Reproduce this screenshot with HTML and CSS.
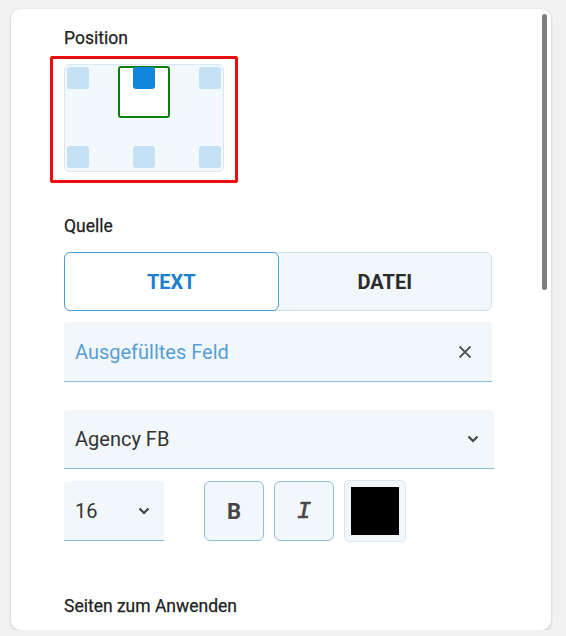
FILE: index.html
```html
<!DOCTYPE html>
<html lang="de">
<head>
    <meta charset="UTF-8">
    <meta name="viewport" content="width=device-width, initial-scale=1.0">
    <title>Textstempel</title>
    <link rel="stylesheet" href="styles.css">
</head>
<body>
    <div class="panel">
        <div class="panel-scroll">
            <div class="label">Position</div>

            <div class="position-frame">
                <div class="position-grid">
                    <div class="pos-col">
                        <span class="pos-dot"></span>
                        <span class="pos-dot"></span>
                    </div>
                    <div class="pos-col">
                        <span class="pos-dot active"></span>
                        <span class="pos-dot"></span>
                    </div>
                    <div class="pos-col">
                        <span class="pos-dot"></span>
                        <span class="pos-dot"></span>
                    </div>
                    <div class="pos-selected"></div>
                </div>
            </div>

            <div class="label label-source">Quelle</div>

            <div class="tabs">
                <button class="tab active">TEXT</button>
                <button class="tab">DATEI</button>
            </div>

            <div class="field">
                <span class="field-value">Ausgefülltes Feld</span>
                <svg class="field-icon" width="14" height="14" viewBox="0 0 14 14">
                    <path d="M1.5 1.5 L12.5 12.5 M12.5 1.5 L1.5 12.5" stroke="#555" stroke-width="1.8" fill="none"/>
                </svg>
            </div>

            <div class="select select-font">
                <span>Agency FB</span>
                <svg class="chevron" width="12" height="8" viewBox="0 0 12 8">
                    <path d="M1.5 1.5 L6 6 L10.5 1.5" stroke="#444" stroke-width="2.2" fill="none"/>
                </svg>
            </div>

            <div class="format-row">
                <div class="select select-size">
                    <span>16</span>
                    <svg class="chevron" width="12" height="8" viewBox="0 0 12 8">
                        <path d="M1.5 1.5 L6 6 L10.5 1.5" stroke="#444" stroke-width="2.2" fill="none"/>
                    </svg>
                </div>
                <div class="style-buttons">
                    <button class="style-btn bold">B</button>
                    <button class="style-btn italic">I</button>
                </div>
                <div class="color-swatch">
                    <span class="color-fill"></span>
                </div>
            </div>

            <div class="label label-pages">Seiten zum Anwenden</div>
        </div>
        <div class="scrollbar"></div>
    </div>
</body>
</html>
```

FILE: styles.css
```css
body {
    margin: 0;
    background: #f2f2f2;
    font-family: Roboto, "Liberation Sans", sans-serif;
    color: #2b2b2b;
}

.panel {
    position: relative;
    margin: 9px 0 0 11px;
    width: 540px;
    height: 621px;
    background: #fff;
    border-radius: 9px;
    box-shadow: 0 1px 3px rgba(0, 0, 0, 0.22);
    overflow: hidden;
}

.panel-scroll {
    display: flex;
    flex-direction: column;
    align-items: flex-start;
    padding: 19px 0 0 53px;
}

.label {
    font-size: 17.5px;
    font-weight: 400;
    line-height: 20px;
    color: #222;
    -webkit-text-stroke: 0.25px #222;
}

/* Position picker */
.position-frame {
    margin: 8px 0 0 -14px;
    padding: 5px 11px 8px 11px;
    border: 3px solid #f00c0c;
    border-radius: 2px;
}

.position-grid {
    position: relative;
    display: flex;
    justify-content: space-between;
    width: 154px;
    height: 102px;
    padding: 2px;
    background: #f3f8fc;
    border: 1px solid #d7e8f4;
    border-radius: 5px;
}

.pos-col {
    display: flex;
    flex-direction: column;
    justify-content: space-between;
    padding-bottom: 1px;
}

.pos-dot {
    display: block;
    width: 22px;
    height: 22px;
    border-radius: 3px;
    background: #c5e1f6;
    position: relative;
    z-index: 1;
}

.pos-dot.active {
    background: #0d86db;
}

.pos-selected {
    position: absolute;
    top: 1px;
    left: 53px;
    width: 48px;
    height: 48px;
    border: 2px solid #0b7f0b;
    border-radius: 3px;
    background: #fff;
}

.label-source {
    margin-top: 33px;
}

/* Source tabs */
.tabs {
    display: flex;
    margin-top: 16px;
    width: 428px;
    height: 59px;
    background: #f2f7fc;
    border: 1px solid #cfe3ef;
    border-radius: 6px;
    box-sizing: border-box;
}

.tab {
    flex: 1;
    border: none;
    background: transparent;
    font-family: inherit;
    font-size: 20px;
    font-weight: 700;
    color: #2b2b2b;
    cursor: pointer;
}

.tab.active {
    margin: -1px 0 -1px -1px;
    background: #fff;
    border: 1.5px solid #4d9fd9;
    border-radius: 6px;
    color: #1b7fd0;
}

/* Inputs */
.field,
.select {
    display: flex;
    align-items: center;
    justify-content: space-between;
    box-sizing: border-box;
    height: 60px;
    padding: 0 20px 0 11px;
    background: #f2f7fc;
    border-bottom: 1px solid #86bcd9;
    border-radius: 4px 4px 0 0;
    font-size: 20px;
}

.field {
    margin-top: 11px;
    width: 428px;
}

.field-value {
    color: #569ed6;
}

.select {
    color: #333;
}

.select-font {
    margin-top: 28px;
    width: 430px;
    height: 59px;
    padding-right: 15px;
}

.format-row {
    display: flex;
    align-items: center;
    margin-top: 11px;
}

.select-size {
    width: 100px;
    height: 60px;
    padding-right: 14px;
}

.style-buttons {
    display: flex;
    gap: 10px;
    margin-left: 40px;
}

.style-btn {
    width: 60px;
    height: 60px;
    background: #f2f7fc;
    border: 1px solid #8fc0dc;
    border-radius: 6px;
    color: #454545;
    cursor: pointer;
    padding: 0;
}

.style-btn.bold {
    font-family: Roboto, sans-serif;
    font-size: 22px;
    font-weight: 700;
}

.style-btn.italic {
    font-family: "Liberation Mono", monospace;
    font-size: 24px;
    font-style: italic;
    font-weight: 400;
    -webkit-text-stroke: 0.6px #454545;
}

.color-swatch {
    margin-left: 10px;
    padding: 6px;
    background: #f1f7fd;
    border: 1px solid #d3e7f4;
    border-radius: 5px;
}

.color-fill {
    display: block;
    width: 48px;
    height: 48px;
    background: #000;
}

.label-pages {
    margin-top: 54px;
}

.scrollbar {
    position: absolute;
    top: 5px;
    right: 4px;
    width: 5px;
    height: 276px;
    border-radius: 3px;
    background: #7f7f7f;
}
```
